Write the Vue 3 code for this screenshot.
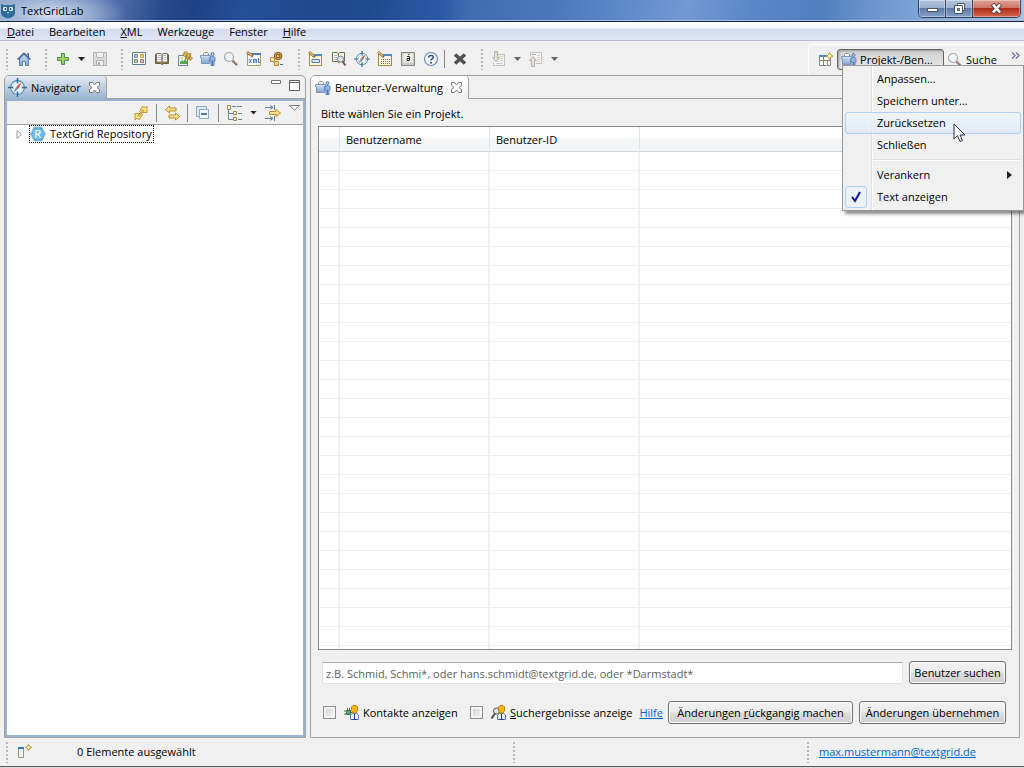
<script setup>
import { ref } from 'vue'

const menus = [
  { key: 'D', rest: 'atei' },
  { key: '', rest: 'Bearbeiten' },
  { key: 'X', rest: 'ML' },
  { key: '', rest: 'Werkzeuge' },
  { key: '', rest: 'Fenster' },
  { key: 'H', rest: 'ilfe' },
]

const toolGroups = [
  ['home'],
  ['plus', 'drop', 'save'],
  ['grid', 'book', 'picture', 'users', 'search', 'xml', 'workflow'],
  ['edit', 'booksearch', 'compass', 'editdots', 'charkey', 'help', 'sep', 'delete'],
  ['import', 'dropgrey', 'export', 'dropgrey'],
]

const viewTools = ['refresh', 'sep', 'link', 'sep', 'collapse', 'sep', 'tree', 'drop', 'filter']

const popup = [
  { label: 'Anpassen...' },
  { label: 'Speichern unter...' },
  { label: 'Zurücksetzen', active: true },
  { label: 'Schließen' },
  { divider: true },
  { label: 'Verankern', sub: true },
  { label: 'Text anzeigen', checked: true },
]

const rows = 27
const query = ref('')
const contacts = ref(false)
const results = ref(false)
</script>

<template>
  <div class="window">
    <svg class="defs" aria-hidden="true">
      <defs>
        <linearGradient id="blue" x1="0" y1="0" x2="0" y2="1">
          <stop offset="0" stop-color="#d5e4f4" /><stop offset="1" stop-color="#7fa3d0" />
        </linearGradient>
        <linearGradient id="gold" x1="0" y1="0" x2="0" y2="1">
          <stop offset="0" stop-color="#fff7c8" /><stop offset="1" stop-color="#f3c75c" />
        </linearGradient>
        <symbol id="home" viewBox="0 0 16 16">
          <path d="M11.500 4V2.500h1V6" fill="#9bb7dc" stroke="#4a6899" />
          <path d="M3.500 8v6.500h3v-4h3v4h3V8L8 3.500z" fill="url(#blue)" stroke="#5f7dae" />
          <path d="M1.500 8.500L8 2.200l6.500 6.300" fill="none" stroke="#44618f" stroke-width="1.500" />
        </symbol>
        <symbol id="plus" viewBox="0 0 16 16">
          <path d="M6.500 2.500h3v4h4v3h-4v4h-3v-4h-4v-3h4z" fill="#8dc54a" stroke="#4c9548" />
          <path d="M8 4v8M4 8h8" stroke="#b9dd78" />
        </symbol>
        <symbol id="save" viewBox="0 0 16 16">
          <path d="M1.500 1.500h13v13h-13z" fill="#dcdcdc" stroke="#b4b4b4" />
          <path d="M4.500 1.500h7v5h-7z" fill="#f5f5f5" stroke="#b8b8b8" />
          <path d="M4.500 9.500h7v5h-7z" fill="#f0f0f0" stroke="#b0b0b0" />
          <path d="M6 11h2v3H6z" fill="#b0b0b0" />
        </symbol>
        <symbol id="grid" viewBox="0 0 16 16">
          <path d="M1.500 1.500h13v12h-13z" fill="#fff" stroke="#5b7c9e" />
          <path d="M3.500 3.500h3v3h-3z" fill="#aac4e4" stroke="#7d8994" />
          <path d="M9.500 3.500h3v3h-3z" fill="#f7dc3b" stroke="#b8a04a" />
          <path d="M3.500 8.500h3v3h-3z" fill="#b5d28c" stroke="#7f8b73" />
          <path d="M9.500 8.500h3v3h-3z" fill="#e7b4bd" stroke="#a07581" />
        </symbol>
        <symbol id="book" viewBox="0 0 16 16">
          <path d="M1.500 3.500v9h5l1.500 1 1.500-1h5v-9" fill="#9b8350" stroke="#6d5c35" />
          <path d="M2.500 2.500H7l1 1v8.500l-1.500-1h-4zM13.500 2.500H9l-1 1v8.500l1.500-1h4z" fill="#fffef6" stroke="#76715f" />
          <path d="M4 4.500h3M4 6.500h3M4 8.500h3M9 4.500h3M9 6.500h3M9 8.500h3" stroke="#b2c5d8" />
        </symbol>
        <symbol id="picture" viewBox="0 0 16 16">
          <path d="M1.500 4.500h9v10h-9z" fill="#e5f3fd" stroke="#73829a" />
          <path d="M3 13v-2l2-2 1 1.500 2-2 2 2V13z" fill="#55a83b" />
          <path d="M4 6h2v2H4z" fill="#f8d23d" />
          <g fill="#f1ca62" stroke="#94711d" stroke-width=".8">
            <path d="M7 1.500l2.500-1L11 3l3-.5L13 5.500l2.500 1.500-2 2.500L11 7.500 8.500 8.500 9 5.500 6 4.500z" />
          </g>
          <path d="M7.500 2l6 6.500M10 2.500L9.500 7M13 4l-1 3.500" stroke="#94711d" stroke-width=".8" />
        </symbol>
        <symbol id="users" viewBox="0 0 16 16">
          <path d="M3.500 4V2.500l1-1h3l1 1V4" fill="#eef2f7" stroke="#9b9184" />
          <path d="M.5 4.500h10v2h-1v6h-8v-6h-1z" fill="url(#blue)" stroke="#7d97ba" />
          <circle cx="12.500" cy="3" r="1.500" fill="#a9c7ec" stroke="#416aa2" stroke-width=".8" />
          <path d="M11.500 5.500h2l1.500 1V10h-1v4.500h-3V10H10V6.500z" fill="#93b8e6" stroke="#5079af" stroke-width=".9" />
          <path d="M12.500 9.500v5" stroke="#416aa2" stroke-width=".8" />
        </symbol>
        <symbol id="search" viewBox="0 0 16 16">
          <circle cx="6" cy="6" r="4.500" fill="#edf7fc" stroke="#a3a7ac" stroke-width="1.200" />
          <path d="M3.500 6A2.500 2.500 0 0 1 6 3.500" fill="none" stroke="#fff" stroke-width="1.500" />
          <path d="M9.500 9.500l4.500 4.500" stroke="#805f55" stroke-width="2.200" />
          <path d="M9.500 9l4 4" stroke="#d0aa98" />
        </symbol>
        <symbol id="xml" viewBox="0 0 16 16">
          <path d="M1.500 2.500h13v12h-13z" fill="#f6fbff" stroke="#b39b63" />
          <path d="M1 2h14v2H1z" fill="#4380c1" />
          <path d="M3 8l2.500 4M5.500 8L3 12M7.500 12V8.500H9V12M9 8.500h1.500V12M12.500 7v4.500H14" stroke="#386caa" stroke-width=".9" fill="none" />
          <path d="M1 1l6 4.500" stroke="#8b5e2c" stroke-width="2.600" /><path d="M1 1l5 3.500" stroke="#f4c778" stroke-width="1.300" />
        </symbol>
        <symbol id="workflow" viewBox="0 0 16 16">
          <circle cx="9" cy="5" r="3.500" fill="#deb24e" stroke="#80501b" stroke-width="1.100" />
          <path d="M5.500 1.500l7 7M12.500 1.500l-7 7M9 .5v2M13.500 5h-2" stroke="#a36b21" />
          <circle cx="9" cy="5" r="1.500" fill="#f6efe1" stroke="#80501b" />
          <path d="M1.500 6.500h4v4h-4zM5.500 10.500h4v4h-4z" fill="url(#gold)" stroke="#c48b39" />
          <path d="M11 13.500h3" stroke="#3a6ea9" />
        </symbol>
        <symbol id="edit" viewBox="0 0 16 16">
          <path d="M1.500 3.500h12v11h-12z" fill="#fdf8df" stroke="#9f8a48" />
          <path d="M5 3h9v2H5z" fill="#4f89c4" />
          <path d="M4 8.500h7.500v3H4z" fill="#d9ecff" stroke="#517ca7" />
          <path d="M1 1l6 5" stroke="#87602d" stroke-width="2.600" /><path d="M1 1l5 4" stroke="#efc47c" stroke-width="1.300" />
        </symbol>
        <symbol id="editdots" viewBox="0 0 16 16">
          <path d="M1.500 3.500h13v11h-13z" fill="#fdf8df" stroke="#9f8a48" />
          <path d="M6 3h9v2H6z" fill="#4f89c4" />
          <path d="M4 8.500h9M4 10.500h9M4 12.500h9" stroke="#8b731f" stroke-dasharray="1 1" />
          <path d="M1 1l6 5" stroke="#87602d" stroke-width="2.600" /><path d="M1 1l5 4" stroke="#efc47c" stroke-width="1.300" />
        </symbol>
        <symbol id="booksearch" viewBox="0 0 16 16">
          <path d="M1.500 1.500H6l1.500 1v9L6 10.500H1.500zM13.500 1.500H9l-1.500 1v9l1.500-1h4.500z" fill="#fffbe9" stroke="#766b4d" />
          <path d="M3 4.500h3M3 6.500h3M3 8.500h3" stroke="#a8c2dc" />
          <circle cx="9.500" cy="8" r="3" fill="#dceef9" stroke="#78818e" />
          <path d="M11.500 10.500l3 4" stroke="#795348" stroke-width="2" />
        </symbol>
        <symbol id="compass" viewBox="0 0 18 18">
          <circle cx="9" cy="9" r="6.500" fill="#f2f8fc" stroke="#4c86ae" />
          <circle cx="9" cy="9" r="4.500" fill="none" stroke="#cfdfe8" />
          <path d="M9 0v5M9 18v-5M0 9h5M18 9h-5" stroke="#2f6c98" stroke-width="1.400" />
          <path d="M8 8l5-4-3 6z" fill="#e34935" /><path d="M8 8l2 2-5 4z" fill="#7a8b97" />
        </symbol>
        <symbol id="charkey" viewBox="0 0 16 16">
          <path d="M1.500 1.500h13v13h-13z" fill="#c9c9c5" stroke="#85877f" />
          <path d="M3 2.500h10v9H3z" fill="#f0f0ed" stroke="#dadad6" />
          <path d="M7 5.500h2.500v4H7V7.500h2M8 4l1.500-1" fill="none" stroke="#292929" />
        </symbol>
        <symbol id="help" viewBox="0 0 16 16">
          <circle cx="8" cy="8" r="6.500" fill="#eef3fa" stroke="#7189ae" stroke-width="1.100" />
          <path d="M5.700 6.500c0-2.700 4.600-2.700 4.600-.3 0 1.600-2.300 1.600-2.300 3.300" fill="none" stroke="#354f82" stroke-width="1.500" />
          <path d="M7 11h2v1.600H7z" fill="#354f82" />
        </symbol>
        <symbol id="delete" viewBox="0 0 16 16">
          <path d="M3 3.500l10 9M13 3.500l-10 9" stroke="#505050" stroke-width="3.600" />
        </symbol>
        <symbol id="import" viewBox="0 0 16 16">
          <path d="M7 3.500h6.500v11h-11v-3" fill="#f5f5f3" stroke="#c0c0c0" />
          <path d="M9 5.500h3M9 7.500h3M9 9.500h3M5 12.500h7" stroke="#cdd1d6" />
          <path d="M3.500.5h3v6h2L5 10.500 1.500 6.500h2z" fill="#e4e1d4" stroke="#b3b1a6" />
        </symbol>
        <symbol id="export" viewBox="0 0 16 16">
          <path d="M2.500 5V1.500h11v11H8" fill="#f5f5f3" stroke="#c0c0c0" />
          <path d="M4 3.500h4" stroke="#9faab5" /><path d="M9 4.500h3M9 6.500h3M9 8.500h3M9 10.500h3" stroke="#cdd1d6" />
          <path d="M3.500 15.500h3v-6h2L5 5.500 1.500 9.500h2z" fill="#e4e1d4" stroke="#b3b1a6" />
        </symbol>
        <symbol id="refresh" viewBox="0 0 16 16">
          <path d="M9.500 1.500l3 1 1.500-1.500v6.500H9l2-2-1.500-.5-1.500 3L6.500 6.500z" fill="#fbe08a" stroke="#c18e20" stroke-width=".9" />
          <path d="M6.500 14.500l-3-1L2 15V8.500h5l-2 2 1.500.5 1.500-3 1.500 1.500z" fill="#fbe08a" stroke="#c18e20" stroke-width=".9" />
        </symbol>
        <symbol id="link" viewBox="0 0 16 16">
          <path d="M1.500 4.500l4-3.500v2H12v3H5.500v2z" fill="url(#gold)" stroke="#c18e20" />
          <path d="M15.500 11.500l-4 3.500v-2H5v-3h6.500V8z" fill="url(#gold)" stroke="#c18e20" />
        </symbol>
        <symbol id="collapse" viewBox="0 0 16 16">
          <path d="M1.500 1.500h10v10h-10z" fill="#dceaf7" stroke="#8ba9ca" />
          <path d="M4.500 4.500h9v9h-9z" fill="#f4faff" stroke="#8ba9ca" />
          <path d="M6 9h6" stroke="#24517f" stroke-width="1.500" />
        </symbol>
        <symbol id="tree" viewBox="0 0 16 16">
          <path d="M2.500 5v9.500H7M2.500 8.500H7M6 1.500h4M11 1.500h5M12 8.500h4M12 14.500h4" fill="none" stroke="#6882a6" />
          <path d="M1.500.5h3v4h-3zM7.500 6.500h3v3h-3zM7.500 12.500h3v3h-3z" fill="#fffbe0" stroke="#97864a" />
        </symbol>
        <symbol id="filter" viewBox="0 0 16 16">
          <path d="M0 2.500h8M5 .5l3 2-3 2M9.500 0v5M0 13.500h8M5 11.500l3 2-3 2M9.500 11v5" fill="none" stroke="#68829b" />
          <path d="M4.500 6.500H11v-2l4.500 3.500-4.500 3.500v-2H4.500z" fill="url(#gold)" stroke="#c18e20" />
        </symbol>
        <symbol id="perspective" viewBox="0 0 16 16">
          <path d="M1.500 3.500h11v10h-11z" fill="#fffef8" stroke="#7c8a9d" />
          <path d="M1 3h8v2H1z" fill="#4889c7" />
          <path d="M5.500 5v9M2 8.500h10M9.500 9v4" stroke="#8c8461" />
          <path d="M11.500.5l1.200 2.300 2.300 1.200-2.300 1.200-1.200 2.300-1.200-2.300L8 4l2.300-1.200z" fill="#fff4ad" stroke="#b6902d" stroke-width=".9" />
        </symbol>
        <symbol id="fastview" viewBox="0 0 16 16">
          <path d="M1.500 3.500h5v10h-5z" fill="#eef8ff" stroke="#9b9574" />
          <path d="M1 3h6v2H1z" fill="#3979b9" />
          <path d="M11.500.5l1 2 2 1-2 1-1 2-1-2-2-1 2-1z" fill="#fff8c8" stroke="#b58b21" />
        </symbol>
        <symbol id="repo" viewBox="0 0 16 16">
          <path d="M4 1h8l3.500 7-3.500 7H4L.5 8z" fill="#4394c4" stroke="#a8cfe3" />
          <circle cx="8" cy="8" r="6" fill="#6fb9e2" />
          <path d="M6 12V4.500h2.500a1.700 1.700 0 0 1 0 3.500H6M8 8l2.500 4" stroke="#fff" stroke-width="1.200" fill="none" />
        </symbol>
        <symbol id="person" viewBox="0 0 9 15">
          <path d="M.5 14.500V10l2-1.500h4l2 1.500v4.500z" fill="#eaf1ff" stroke="#6078ac" />
          <path d="M4.500 9v5M2.500 14.500h4" stroke="#183d99" />
          <path d="M3 .5h3L7.500 2v3.500L6 8H3L1.500 5.500V2z" fill="#f8b511" stroke="#bd810c" />
        </symbol>
        <symbol id="contact" viewBox="0 0 16 16">
          <path d="M0 6h2M0 9h2M6 7.500h3" stroke="#47705a" /><path d="M2.500 5.500h4v4h-4z" fill="#61a576" stroke="#356d4b" />
          <path d="M3.500 3v2M5.500 3v2" stroke="#48725a" />
          <use href="#person" x="6" y="0" width="9" height="15" />
        </symbol>
        <symbol id="result" viewBox="0 0 16 16">
          <circle cx="5.500" cy="6" r="3" fill="#dce7e7" stroke="#555" />
          <path d="M4 8.500l-3.500 5" stroke="#4e4e4e" stroke-width="2" />
          <use href="#person" x="6" y="0" width="9" height="15" />
        </symbol>
        <symbol id="close" viewBox="0 0 11 11">
          <path d="M.5.500h3l2 2.500 2-2.500h3v3L8 5.500l2.500 2v3h-3l-2-2.500-2 2.500h-3v-3L3 5.500.500 3.500z" fill="#fff" stroke="#777" />
        </symbol>
      </defs>
    </svg>

    <header class="titlebar">
      <svg class="owl" viewBox="0 0 14 16" aria-hidden="true">
        <path d="M0 1l3 1h8l3-1v9c0 3-3 4.500-7 5.500-4-1-7-2.500-7-5.500z" fill="#2f6c98" />
        <circle cx="4" cy="6" r="2.200" fill="#e8f2f8" /><circle cx="10" cy="6" r="2.200" fill="#e8f2f8" />
        <circle cx="4.500" cy="6" r="1" fill="#1b4770" /><circle cx="9.500" cy="6" r="1" fill="#1b4770" />
        <path d="M6 9h2l-1 2z" fill="#d9e7f1" />
      </svg>
      <span class="title">TextGridLab</span>
      <div class="controls">
        <button class="ctl" aria-label="Minimieren">
          <svg width="13" height="13"><path d="M1.500 6.500h10v3h-10z" fill="#fff" stroke="#4a5466" /></svg>
        </button>
        <button class="ctl" aria-label="Wiederherstellen">
          <svg width="13" height="13">
            <path d="M4.500 1.500h7v7h-7z" fill="#fff" stroke="#4a5466" />
            <path d="M1.500 3.500h8v8h-8z" fill="#fff" stroke="#4a5466" /><path d="M4.500 6.500h2v2h-2z" fill="#8ca4c4" stroke="#4a5466" />
          </svg>
        </button>
        <button class="ctl quit" aria-label="Schließen">
          <svg width="13" height="13">
            <path d="M2.500 2l8 9M10.500 2l-8 9" stroke="#60414a" stroke-width="4.600" /><path d="M3 2.500l7 8M10 2.500l-7 8" stroke="#fff" stroke-width="2.600" />
          </svg>
        </button>
      </div>
    </header>

    <nav class="menubar">
      <button v-for="m in menus" :key="m.rest" class="menu"><u>{{ m.key }}</u>{{ m.rest }}</button>
    </nav>

    <div class="toolbar">
      <div v-for="(group, g) in toolGroups" :key="g" class="group">
        <i class="grip"></i>
        <template v-for="(name, i) in group" :key="i">
          <i v-if="name === 'sep'" class="sep"></i>
          <button v-else-if="name.startsWith('drop')" class="tool drop" :class="{ grey: name === 'dropgrey' }" aria-label="Mehr"></button>
          <button v-else class="tool" :aria-label="name"><svg><use :href="'#' + name" /></svg></button>
        </template>
      </div>
      <div class="perspectives">
        <button class="tool" aria-label="Perspektive öffnen"><svg><use href="#perspective" /></svg></button>
        <button class="persp pressed"><svg><use href="#users" /></svg>Projekt-/Ben...</button>
        <button class="persp"><svg><use href="#search" /></svg>Suche</button>
        <button class="more" aria-label="Weitere">
          <svg width="9" height="7"><path d="M1 .5l3 3-3 3M5 .5l3 3-3 3" fill="none" stroke="#6c6cae" stroke-width="1.300" /></svg>
        </button>
      </div>
    </div>

    <main class="work">
      <section class="pane navigator">
        <div class="tabs">
          <div class="tab">
            <svg class="tab-icon"><use href="#compass" /></svg>Navigator
            <button class="close" aria-label="Navigator schließen"><svg><use href="#close" /></svg></button>
          </div>
          <div class="pane-buttons">
            <button aria-label="Minimieren"><svg width="11" height="11"><path d="M.5.5h9v3h-9z" fill="#fff" stroke="#707070" /></svg></button>
            <button aria-label="Maximieren"><svg width="11" height="11"><path d="M.5.5h10v10H.5zM1 2.500h9" fill="#fff" stroke="#606060" /></svg></button>
          </div>
        </div>
        <div class="nav-body">
          <div class="view-tools">
            <template v-for="(name, i) in viewTools" :key="i">
              <i v-if="name === 'sep'" class="sep"></i>
              <button v-else-if="name === 'drop'" class="tool drop" aria-label="Mehr"></button>
              <button v-else class="tool" :aria-label="name"><svg><use :href="'#' + name" /></svg></button>
            </template>
            <button class="view-menu" aria-label="Ansichtsmenü">
              <svg width="11" height="6"><path d="M.5.5h10l-5 4.500z" fill="#fff" stroke="#777" /></svg>
            </button>
          </div>
          <div class="tree">
            <div class="node">
              <svg class="twisty" width="7" height="9"><path d="M1 .5v8l4.500-4z" fill="#fff" stroke="#9a9a9a" /></svg>
              <span class="node-label"><svg><use href="#repo" /></svg>TextGrid Repository</span>
            </div>
          </div>
        </div>
      </section>

      <section class="pane editor">
        <div class="tabs">
          <div class="tab">
            <svg class="tab-icon"><use href="#users" /></svg>Benutzer-Verwaltung
            <button class="close" aria-label="Benutzer-Verwaltung schließen"><svg><use href="#close" /></svg></button>
          </div>
          <div class="pane-buttons"></div>
        </div>
        <div class="editor-body">
          <p class="hint">Bitte wählen Sie ein Projekt.</p>
          <div class="table-wrap">
            <table>
              <colgroup><col class="c-mark"><col class="c-name"><col class="c-name"><col></colgroup>
              <thead>
                <tr><th></th><th>Benutzername</th><th>Benutzer-ID</th><th></th></tr>
              </thead>
              <tbody>
                <tr v-for="n in rows" :key="n"><td></td><td></td><td></td><td></td></tr>
              </tbody>
            </table>
          </div>
          <form class="find" @submit.prevent>
            <input v-model="query" type="text" aria-label="Benutzer suchen" placeholder="z.B. Schmid, Schmi*, oder hans.schmidt@textgrid.de, oder *Darmstadt*">
            <button class="btn">Benutzer suchen</button>
          </form>
          <div class="actions">
            <input id="contacts" v-model="contacts" type="checkbox">
            <label for="contacts"><svg><use href="#contact" /></svg>Kontakte anzeigen</label>
            <input id="results" v-model="results" type="checkbox">
            <label for="results" class="cut"><svg><use href="#result" /></svg><span><u>S</u>uchergebnisse anzeigen</span></label>
            <a href="#">Hilfe</a>
            <button class="btn undo">Änderungen <u>r</u>ückgangig machen</button>
            <button class="btn apply">Änderungen übernehmen</button>
          </div>
        </div>
      </section>
    </main>

    <footer class="status">
      <div class="status-main">
        <i class="grip"></i>
        <svg><use href="#fastview" /></svg>
        <span>0 Elemente ausgewählt</span>
      </div>
      <div class="status-mid"><i class="grip"></i></div>
      <div class="status-user"><i class="grip"></i><a href="#">max.mustermann@textgrid.de</a></div>
    </footer>

    <div class="popup" role="menu">
      <template v-for="(p, i) in popup" :key="i">
        <div v-if="p.divider" class="divider"></div>
        <button v-else class="entry" :class="{ active: p.active }" role="menuitem">
          <span v-if="p.checked" class="check">
            <svg width="10" height="12"><path d="M1 6l3 4 5-9" fill="none" stroke="#12129b" stroke-width="2" /></svg>
          </span>
          {{ p.label }}
          <svg v-if="p.sub" class="arrow" width="5" height="8"><path d="M0 0v8l5-4z" fill="#222" /></svg>
        </button>
      </template>
      <svg class="pointer" width="13" height="20" viewBox="0 0 13 20" aria-hidden="true">
        <path d="M1 1v15l3.500-3.300L7 18.500l2.500-1L7 12h5z" fill="#fff" stroke="#222c44" />
      </svg>
    </div>
  </div>
</template>

<style>
html,
body {
  height: 100%;
  margin: 0;
}
</style>

<style scoped>
.window {
  position: relative;
  display: flex;
  flex-direction: column;
  height: 100vh;
  overflow: hidden;
  box-sizing: border-box;
  background: #f0f0f0;
  border-bottom: 1px solid #d8d8d8;
  color: #000;
  font: 11px/16px "Open Sans", "Noto Sans", sans-serif;
}

.window *,
.window *::before {
  box-sizing: border-box;
}

.defs {
  position: absolute;
  width: 0;
  height: 0;
}

svg {
  display: block;
  flex: none;
}

button {
  padding: 0;
  border: 0;
  background: none;
  color: inherit;
  font: inherit;
  white-space: nowrap;
}

a {
  color: #0066cc;
}

.titlebar {
  display: flex;
  flex: none;
  height: 22px;
  padding: 0 3px 0 1px;
  border-bottom: 1px solid #17243e;
  box-shadow: inset 0 -1px #a7bddf;
  background:
    radial-gradient(ellipse 75px 26px at 52px 14px, rgba(225, 232, 243, .9) 0, rgba(185, 202, 228, .65) 50%, rgba(120, 150, 200, 0) 100%),
    linear-gradient(100deg, #8ea5cc 0, #6b86b8 6%, #4a68a5 12%, #264a8c 16%, #1f4186 19%, #24509a 24%, #20488f 30%, #1f4a90 36%, #2a5aa6 43%, #416cb2 46%, #4d77bc 54%, #5b87c8 60%, #7399d4 67%, #5b87c8 73%, #4f7fc0 80%, #6d95cd 85%, #7fa5d8 90%, #a9c3e6 100%);
}

.owl {
  width: 14px;
  height: 16px;
  margin-top: 3px;
}

.title {
  margin: 3px 0 0 6px;
}

.controls {
  display: flex;
  height: 18px;
  margin-left: auto;
  border: 1px solid #33415e;
  border-top: 0;
  border-radius: 0 0 5px 5px;
  overflow: hidden;
}

.ctl {
  display: flex;
  justify-content: center;
  align-items: center;
  width: 27px;
  border-right: 1px solid #33415e;
  background: linear-gradient(#b4c5dd 0, #9db2d0 45%, #607aa3 50%, #86a4ca 100%);
  box-shadow: inset 0 0 0 1px rgba(255, 255, 255, .35);
}

.quit {
  width: 47px;
  border-right: 0;
  background: linear-gradient(#dfa195 0, #cf7767 45%, #b02c1c 50%, #d56a4c 100%);
}

.menubar {
  display: flex;
  flex: none;
  gap: 15px;
  height: 19px;
  padding: 2px 7px 0;
  border-bottom: 1px solid #b6bccc;
  background: linear-gradient(#fff 0, #f1f4fa 35%, #d5dcef 40%, #e0e5f5 100%);
}

.toolbar {
  display: flex;
  flex: none;
  gap: 13px;
  height: 34px;
  padding-left: 6px;
}

.group {
  display: flex;
  align-items: center;
  gap: 7px;
  padding-top: 2px;
}

.grip {
  flex: none;
  width: 2px;
  height: 21px;
  background: repeating-linear-gradient(#b8b8b8 0 2px, transparent 2px 4px);
}

.group .grip {
  margin-right: 1px;
}

.tool {
  flex: none;
  width: 16px;
  height: 16px;
}

.tool svg,
.persp svg,
.node-label svg,
.actions svg,
.status svg {
  width: 16px;
  height: 16px;
}

.drop {
  width: 7px;
  height: 4px;
  background: #222;
  clip-path: polygon(0 0, 100% 0, 50% 100%);
}

.grey {
  background: #666;
}

.sep {
  flex: none;
  width: 1px;
  height: 18px;
  background: #858585;
}

.group .sep {
  margin-left: -2px;
}

.perspectives {
  display: flex;
  align-items: center;
  gap: 3px;
  height: 30px;
  margin: 3px 0 0 auto;
  padding: 0 4px 0 9px;
  border-top: 1px solid #fff;
  border-left: 1px solid #fff;
  border-radius: 6px 0 0 0;
}

.persp {
  display: flex;
  align-items: center;
  gap: 3px;
  height: 21px;
}

.pressed {
  width: 107px;
  padding-left: 3px;
  border: 1px solid #666;
  border-radius: 3px;
  background: linear-gradient(#cfcfcf, #e8e8e8);
  box-shadow: inset 1px 1px 2px #999;
}

.more {
  margin: 0 0 8px 11px;
}

.work {
  display: flex;
  flex: 1;
  gap: 4px;
  min-height: 0;
  padding: 0 4px;
}

.pane {
  display: flex;
  flex-direction: column;
  min-width: 0;
  border: 1px solid #a0a0a0;
  border-radius: 5px 5px 0 0;
}

.navigator {
  flex: 0 0 302px;
}

.editor {
  flex: 1;
}

.tabs {
  display: flex;
  flex: none;
  height: 23px;
}

.tab {
  display: flex;
  align-items: center;
  gap: 4px;
  padding: 0 6px 0 4px;
  border-right: 1px solid #a0a0a0;
  border-radius: 4px 4px 0 0;
  background: linear-gradient(#fff, #f0f0f0);
  white-space: nowrap;
}

.navigator .tab {
  padding-left: 3px;
  background: linear-gradient(#e3eaf3, #99b4d1);
}

.tab-icon {
  width: 16px;
  height: 16px;
}

.navigator .tab-icon {
  width: 19px;
  height: 19px;
}

.close {
  margin-left: 4px;
}

.close svg {
  width: 11px;
  height: 11px;
}

.pane-buttons {
  display: flex;
  flex: 1;
  justify-content: flex-end;
  align-items: flex-start;
  gap: 7px;
  padding: 4px 5px;
  border-bottom: 1px solid #a0a0a0;
}

.nav-body {
  display: flex;
  flex: 1;
  flex-direction: column;
  border: 2px solid #99b4d1;
}

.view-tools {
  display: flex;
  flex: none;
  justify-content: flex-end;
  align-items: center;
  gap: 8px;
  height: 24px;
  padding-right: 3px;
  border-bottom: 1px solid #a0a0a0;
}

.view-tools .sep {
  margin: 0 -1px;
}

.view-menu {
  align-self: flex-start;
  margin-top: 4px;
}

.tree {
  flex: 1;
  background: #fff;
}

.node {
  display: flex;
  align-items: center;
  gap: 6px;
  padding-left: 9px;
}

.node-label {
  display: flex;
  gap: 4px;
  height: 18px;
  padding-right: 1px;
  border: 1px dotted #000;
}

.editor-body {
  display: flex;
  flex: 1;
  flex-direction: column;
  min-height: 0;
  padding: 7px 7px 13px;
}

.hint {
  margin: 0 0 4px 3px;
}

.table-wrap {
  flex: 1;
  min-height: 0;
  overflow: hidden;
  border: 1px solid #828790;
  background: #fff;
}

table {
  width: 100%;
  table-layout: fixed;
  border-collapse: separate;
  border-spacing: 0;
}

.c-mark {
  width: 21px;
}

.c-name {
  width: 150px;
}

th {
  height: 25px;
  padding: 2px 0 0 6px;
  border-right: 1px solid #e0e3e8;
  border-bottom: 1px solid #d5d5d5;
  background: linear-gradient(#fff 45%, #f4f5f6 50%);
  font-weight: normal;
  text-align: left;
}

td {
  height: 19px;
  padding: 0;
  border-right: 2px solid #f0f2f5;
  border-bottom: 1px solid #f0f0f0;
}

th:last-child,
td:last-child {
  border-right: 0;
}

.find {
  display: flex;
  flex: none;
  gap: 6px;
  margin: 11px 6px 0 4px;
}

.find input {
  flex: 1;
  min-width: 0;
  height: 22px;
  margin-top: 1px;
  padding: 0 3px;
  border: 1px solid #e2e3ea;
  border-top-color: #abadb3;
  background: #fff;
  font: inherit;
}

.find input::placeholder {
  color: #606060;
  opacity: 1;
}

.btn {
  flex: none;
  width: 97px;
  height: 23px;
  border: 1px solid #707070;
  border-radius: 3px;
  background: linear-gradient(#f2f2f2 0, #ebebeb 48%, #dddddd 52%, #cfcfcf 100%);
  box-shadow: inset 0 0 0 1px #fafafa;
}

.undo {
  width: 185px;
}

.apply {
  width: 147px;
}

.actions {
  display: flex;
  flex: none;
  align-items: center;
  gap: 6px;
  margin: 17px 6px 0 5px;
}

.actions input {
  flex: none;
  appearance: none;
  width: 13px;
  height: 13px;
  margin: 0 2px 0 0;
  border: 1px solid #8e8f8f;
  background: linear-gradient(135deg, #cbcfd5, #f6f6f6);
  box-shadow: inset 0 0 0 2px #f4f4f4;
}

.actions input:checked {
  background: #12129b;
}

.actions label {
  display: flex;
  flex: none;
  gap: 3px;
  width: 120px;
  white-space: nowrap;
}

.actions .cut {
  flex: 1;
  min-width: 0;
  overflow: hidden;
}

.actions a {
  margin-right: -1px;
}

.status {
  display: flex;
  flex: none;
  height: 29px;
  border-bottom: 1px solid #5a5a5a;
}

.status > div {
  display: flex;
  align-items: center;
}

.status-main {
  flex: 1;
  padding-left: 6px;
}

.status-main svg {
  margin: 0 44px 0 9px;
}

.status-mid {
  flex: 0 0 294px;
}

.status-user {
  flex: 0 0 217px;
}

.status-user a {
  margin-left: 10px;
}

.popup {
  position: absolute;
  top: 65px;
  right: 0;
  width: 182px;
  padding: 2px;
  border: 1px solid #979797;
  background: linear-gradient(90deg, #f0f0f0 28px, #e0e0e0 28px 29px, #fff 29px 30px, #f0f0f0 30px);
  box-shadow: 3px 3px 3px rgba(0, 0, 0, .45);
}

.entry {
  position: relative;
  display: flex;
  align-items: center;
  width: 100%;
  height: 22px;
  padding-left: 31px;
  border: 1px solid transparent;
  border-radius: 3px;
}

.active {
  border-color: #aecff7;
  background: linear-gradient(rgba(240, 245, 252, .8), rgba(222, 233, 247, .8));
}

.check {
  position: absolute;
  top: -1px;
  left: -1px;
  display: flex;
  justify-content: center;
  align-items: center;
  width: 22px;
  height: 22px;
  border: 1px solid #aecff7;
  border-radius: 3px;
  background: #edf2f9;
}

.arrow {
  margin: 0 8px 0 auto;
}

.divider {
  height: 2px;
  margin: 3px 0 3px 28px;
  border-top: 1px solid #e0e0e0;
  background: #fff;
}

.pointer {
  position: absolute;
  top: 57px;
  left: 110px;
}
</style>
